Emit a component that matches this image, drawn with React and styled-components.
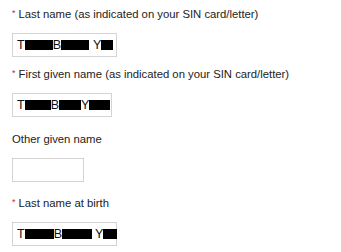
import React from "react";
import styled, { createGlobalStyle } from "styled-components";

const GlobalStyle = createGlobalStyle`
  html, body {
    margin: 0;
    padding: 0;
    background: #ffffff;
  }
  body {
    font-family: "Liberation Sans", Arial, sans-serif;
  }
`;

const Form = styled.form`
  display: flex;
  flex-direction: column;
  padding: 7px 12px 0 12px;
`;

const Field = styled.div`
  display: flex;
  flex-direction: column;
  align-items: flex-start;
  gap: 12px;
  margin-top: ${(p) => p.$top || 0}px;
`;

const Label = styled.label`
  display: flex;
  align-items: flex-start;
  font-size: 11.3px;
  line-height: 14px;
  color: #222222;
  white-space: nowrap;
`;

const Required = styled.span`
  color: #d21f1f;
  font-size: 9px;
  line-height: 9px;
  margin-top: 2px;
  margin-right: 3px;
`;

const Box = styled.div`
  box-sizing: border-box;
  display: flex;
  align-items: center;
  width: ${(p) => p.$width}px;
  height: 24px;
  padding: 0 4px;
  border: 1px solid #d4d4d4;
  background: #ffffff;
  font-size: 12.5px;
  color: #111111;
`;

const Letter = styled.span`
  flex: none;
  margin-left: ${(p) => p.$gap || 0}px;
  white-space: nowrap;
  line-height: 14px;
`;

const Redact = styled.span`
  display: inline-block;
  flex: none;
  width: ${(p) => p.$w}px;
  height: 10px;
  background: #000000;
`;

const RedactedName = ({ parts }) => (
  <>
    {parts.map(([ch, gap, rw], i) => (
      <React.Fragment key={i}>
        <Letter $gap={gap}>{ch}</Letter>
        <Redact $w={rw} />
      </React.Fragment>
    ))}
  </>
);

const fields = [
  {
    label: "Last name (as indicated on your SIN card/letter)",
    required: true,
    width: 105,
    top: 0,
    parts: [
      ["T", 0, 28],
      ["B", 0, 28],
      ["Y", 4, 12],
    ],
  },
  {
    label: "First given name (as indicated on your SIN card/letter)",
    required: true,
    width: 100,
    top: 10,
    parts: [
      ["T", 0, 26],
      ["B", 0, 22],
      ["Y", 0, 21],
    ],
  },
  {
    label: "Other given name",
    required: false,
    width: 72,
    top: 15,
    parts: [],
  },
  {
    label: "Last name at birth",
    required: true,
    width: 105,
    top: 14,
    parts: [
      ["T", 0, 29],
      ["B", 0, 30],
      ["Y", 3, 14],
    ],
  },
];

export default function App() {
  return (
    <>
      <GlobalStyle />
      <Form>
        {fields.map((f) => (
          <Field key={f.label} $top={f.top}>
            <Label>
              {f.required && <Required>*</Required>}
              {f.label}
            </Label>
            <Box $width={f.width}>
              <RedactedName parts={f.parts} />
            </Box>
          </Field>
        ))}
      </Form>
    </>
  );
}
